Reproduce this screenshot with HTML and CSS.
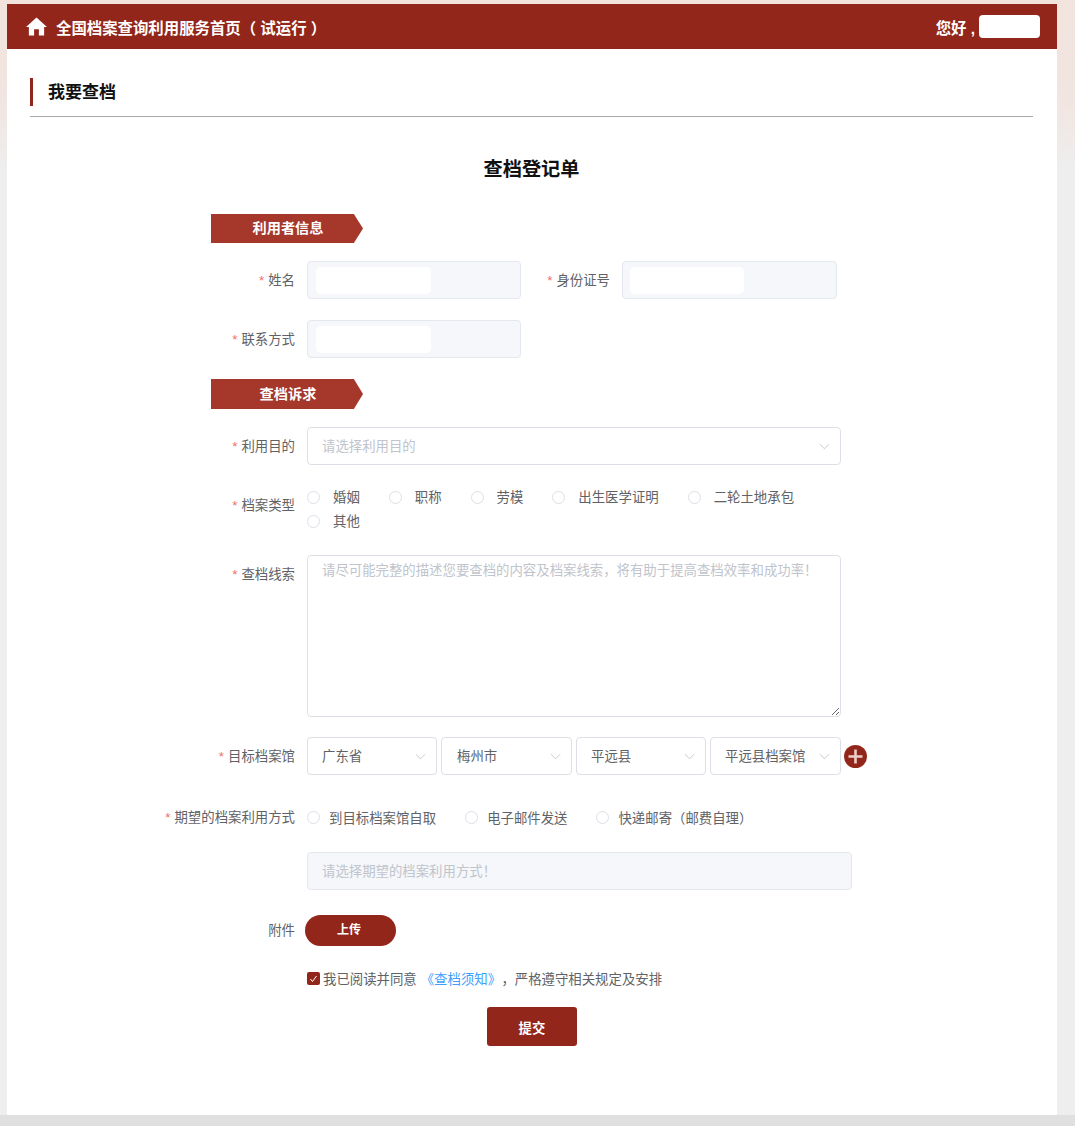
FILE: index.html
```html
<!DOCTYPE html>
<html lang="zh-CN">

<head>
    <meta charset="UTF-8">
    <title>全国档案查询利用服务首页</title>
    <link rel="stylesheet" href="styles.css">
</head>

<body>
    <div class="page">
        <header class="top-bar">
            <div class="brand">
                <svg class="home-icon" viewBox="0 0 22 19" width="21" height="19">
                    <path d="M11 0 L22 10 L19 10 L19 19 L13.5 19 L13.5 12.5 L8.5 12.5 L8.5 19 L3 19 L3 10 L0 10 Z" fill="#fff" />
                </svg>
                <span>全国档案查询利用服务首页（ 试运行 ）</span>
            </div>
            <div class="user">
                <span>您好 ,</span>
                <span class="user-name"></span>
            </div>
        </header>

        <main class="content">
            <div class="section-head">
                <h3>我要查档</h3>
            </div>

            <h2 class="form-title">查档登记单</h2>

            <form class="archive-form">
                <div class="badge">利用者信息</div>

                <div class="form-row first">
                    <label class="field-label"><i>*</i>姓名</label>
                    <div class="masked-input"><span></span></div>
                    <label class="field-label second"><i>*</i>身份证号</label>
                    <div class="masked-input narrow"><span></span></div>
                </div>

                <div class="form-row">
                    <label class="field-label"><i>*</i>联系方式</label>
                    <div class="masked-input"><span></span></div>
                </div>

                <div class="badge tall">查档诉求</div>

                <div class="form-row first">
                    <label class="field-label"><i>*</i>利用目的</label>
                    <div class="select wide placeholder">请选择利用目的
                        <svg class="chevron" viewBox="0 0 12 7"><path d="M1 1 L6 6 L11 1" /></svg>
                    </div>
                </div>

                <div class="form-row">
                    <label class="field-label"><i>*</i>档案类型</label>
                    <div class="radio-group">
                        <span class="radio"><b></b>婚姻</span>
                        <span class="radio"><b></b>职称</span>
                        <span class="radio"><b></b>劳模</span>
                        <span class="radio"><b></b>出生医学证明</span>
                        <span class="radio"><b></b>二轮土地承包</span>
                        <span class="radio"><b></b>其他</span>
                    </div>
                </div>

                <div class="form-row clue-row">
                    <label class="field-label"><i>*</i>查档线索</label>
                    <textarea class="clue" placeholder="请尽可能完整的描述您要查档的内容及档案线索，将有助于提高查档效率和成功率！"></textarea>
                </div>

                <div class="form-row target-row">
                    <label class="field-label"><i>*</i>目标档案馆</label>
                    <div class="select-group">
                        <div class="select s1">广东省
                            <svg class="chevron" viewBox="0 0 12 7"><path d="M1 1 L6 6 L11 1" /></svg>
                        </div>
                        <div class="select s2">梅州市
                            <svg class="chevron" viewBox="0 0 12 7"><path d="M1 1 L6 6 L11 1" /></svg>
                        </div>
                        <div class="select s3">平远县
                            <svg class="chevron" viewBox="0 0 12 7"><path d="M1 1 L6 6 L11 1" /></svg>
                        </div>
                        <div class="select s4">平远县档案馆
                            <svg class="chevron" viewBox="0 0 12 7"><path d="M1 1 L6 6 L11 1" /></svg>
                        </div>
                        <svg class="plus" viewBox="0 0 23 23" width="23" height="23">
                            <circle cx="11.5" cy="11.5" r="11.5" fill="#92261a" />
                            <path d="M4.5 11.5 H18.5 M11.5 4.5 V18.5" stroke="#eccfca" stroke-width="2.6" />
                        </svg>
                    </div>
                </div>

                <div class="form-row way-row">
                    <label class="field-label"><i>*</i>期望的档案利用方式</label>
                    <div class="radio-group inline">
                        <span class="radio"><b></b>到目标档案馆自取</span>
                        <span class="radio"><b></b>电子邮件发送</span>
                        <span class="radio"><b></b>快递邮寄（邮费自理）</span>
                    </div>
                </div>

                <div class="form-row way-tip">
                    <label class="field-label"></label>
                    <div class="disabled-tip">请选择期望的档案利用方式！</div>
                </div>

                <div class="form-row upload-row">
                    <label class="field-label">附件</label>
                    <button type="button" class="upload-btn">上传</button>
                </div>

                <div class="agree">
                    <span class="checkbox">
                        <svg viewBox="0 0 13 13" width="13" height="13"><path d="M3.5 7 L5.5 9.5 L9.5 4" /></svg>
                    </span>
                    <span>我已阅读并同意<a href="#" class="notice">《查档须知》</a>，严格遵守相关规定及安排</span>
                </div>
            </form>

            <div class="submit-wrap">
                <button type="button" class="submit-btn">提交</button>
            </div>
        </main>
    </div>
    <div class="foot-bar"></div>
</body>

</html>
```

FILE: styles.css
```css
/* Global Styles */
body {
    margin: 0;
    height: 1126px;
    overflow: hidden;
    font-family: "Liberation Sans", "Noto Sans CJK SC", sans-serif;
    background: linear-gradient(to bottom, #f2e4dd 0, #f1e5e1 100px, #eeeeee 170px);
    color: #606266;
    font-size: 13.4px;
}

.page {
    width: 1050px;
    margin: 4px 0 0 7px;
    background-color: #fff;
}

.foot-bar {
    height: 11px;
    background-color: #e0e0e0;
}

/* Top bar */
.top-bar {
    height: 45px;
    background-color: #92261a;
    color: #fff;
    display: flex;
    justify-content: space-between;
    align-items: center;
    padding: 0 17px 0 19px;
}

.brand {
    display: flex;
    align-items: center;
    gap: 9px;
    font-size: 15.4px;
    font-weight: bold;
}

.home-icon {
    flex: none;
}

.user {
    display: flex;
    align-items: center;
    font-size: 15.4px;
    font-weight: bold;
}

.user-name {
    width: 61px;
    height: 23px;
    background-color: #fff;
    border-radius: 4px;
    margin-left: 4px;
}

/* Content */
.content {
    height: 1066px;
    padding: 29px 24px 0 23px;
    box-sizing: border-box;
}

.section-head {
    padding-bottom: 10px;
    border-bottom: 1px solid #aaa;
}

.section-head h3 {
    margin: 0;
    height: 28px;
    line-height: 30px;
    border-left: 3px solid #92261a;
    padding-left: 15px;
    font-size: 17px;
    color: #111;
}

.form-title {
    margin: 39px 0 30px;
    height: 28px;
    line-height: 28px;
    text-align: center;
    font-size: 19.2px;
    color: #111;
}

.archive-form {
    margin-left: 181px;
}

.badge {
    width: 150px;
    height: 29px;
    line-height: 29px;
    padding-left: 2px;
    text-align: center;
    background-color: #a5372b;
    color: #fff;
    font-size: 14.2px;
    font-weight: bold;
    clip-path: polygon(0 0, 94% 0, 100% 50%, 94% 100%, 0 100%);
    margin-top: 21px;
}

.badge.tall {
    height: 30px;
    line-height: 31px;
}

.archive-form > .badge:first-child {
    margin-top: 0;
}

/* Rows */
.form-row {
    display: flex;
    margin-top: 21px;
}

.form-row.first {
    margin-top: 18px;
}

.field-label {
    flex: none;
    width: 84px;
    margin-right: 12px;
    line-height: 40px;
    height: 38px;
    white-space: nowrap;
    display: flex;
    justify-content: flex-end;
}

.field-label i {
    color: #f56c6c;
    font-style: normal;
    margin-right: 4px;
}

.field-label.second {
    margin-left: 5px;
    margin-right: 12px;
}

.masked-input {
    width: 214px;
    height: 38px;
    box-sizing: border-box;
    background-color: #f5f7fa;
    border: 1px solid #e4e7ed;
    border-radius: 4px;
    padding: 5px 8px;
}

.masked-input.narrow {
    width: 215px;
    padding-left: 7px;
}

.masked-input span {
    display: block;
    width: 115px;
    height: 27px;
    background-color: #fff;
    border-radius: 5px;
}

.masked-input.narrow span {
    width: 114px;
}

.select {
    height: 38px;
    box-sizing: border-box;
    border: 1px solid #dcdfe6;
    border-radius: 4px;
    padding: 0 14px;
    line-height: 37px;
    position: relative;
    white-space: nowrap;
    background-color: #fff;
}

.select.wide {
    width: 534px;
}

.placeholder {
    color: #c0c4cc;
}

.chevron {
    position: absolute;
    right: 10px;
    top: 15px;
    width: 11px;
    height: 7px;
    fill: none;
    stroke: #c0c4cc;
    stroke-width: 1;
}

.radio-group {
    width: 534px;
    margin-top: -2px;
    display: flex;
    flex-wrap: wrap;
}

.radio {
    display: flex;
    align-items: center;
    height: 24px;
    margin-right: 29px;
    white-space: nowrap;
}

.radio b {
    width: 13px;
    height: 13px;
    margin-top: 2px;
    margin-right: 13px;
    box-sizing: border-box;
    border: 1px solid #dcdfe6;
    border-radius: 50%;
    background-color: #fff;
}

.radio-group.inline {
    align-items: center;
    height: 38px;
    width: 560px;
    margin-top: 0;
}

.radio-group.inline b {
    margin-top: 0;
    margin-right: 9px;
}

.clue-row {
    margin-top: 23px;
}

.clue {
    width: 534px;
    height: 162px;
    box-sizing: border-box;
    border: 1px solid #dcdfe6;
    border-radius: 4px;
    padding: 5px 14px;
    font-family: inherit;
    font-size: 13.4px;
    line-height: 20px;
    display: block;
    margin: 0;
}

.clue::placeholder {
    color: #c0c4cc;
}

.target-row {
    margin-top: 20px;
}

.select-group {
    display: flex;
    align-items: center;
}

.s1 {
    width: 130px;
    margin-right: 4px;
}

.s2 {
    width: 131px;
    margin-right: 4px;
    padding-left: 15px;
}

.s3 {
    width: 130px;
    margin-right: 4px;
}

.s4 {
    width: 131px;
    margin-right: 3px;
}

.way-row {
    margin-top: 23px;
}

.way-tip {
    margin-top: 16px;
}

.disabled-tip {
    width: 545px;
    height: 38px;
    box-sizing: border-box;
    background-color: #f5f7fa;
    border: 1px solid #e4e7ed;
    border-radius: 4px;
    padding: 0 14px;
    line-height: 37px;
    color: #c0c4cc;
}

.upload-row {
    margin-top: 25px;
    align-items: center;
}

.upload-row .field-label {
    height: 31px;
    line-height: 32px;
}

.upload-btn {
    width: 91px;
    height: 31px;
    margin-left: -2px;
    border: none;
    border-radius: 16px;
    background-color: #92261a;
    color: #fff;
    font-family: inherit;
    font-size: 12px;
    font-weight: bold;
    padding: 0 3px 4px 0;
}

.agree {
    display: flex;
    align-items: center;
    margin: 22px 0 0 96px;
    height: 20px;
}

.checkbox {
    width: 13px;
    height: 13px;
    background-color: #92261a;
    border-radius: 2px;
    margin-right: 3px;
    display: flex;
}

.checkbox path {
    fill: none;
    stroke: #fff;
    stroke-width: 1;
}

.notice {
    color: #409eff;
    text-decoration: none;
    margin: 0 7px 0 4px;
}

.submit-wrap {
    text-align: center;
    margin-top: 19px;
    margin-left: 1px;
}

.submit-btn {
    width: 90px;
    height: 39px;
    border: none;
    border-radius: 3px;
    background-color: #92261a;
    color: #fff;
    font-family: inherit;
    font-size: 13.4px;
    font-weight: bold;
}
```
